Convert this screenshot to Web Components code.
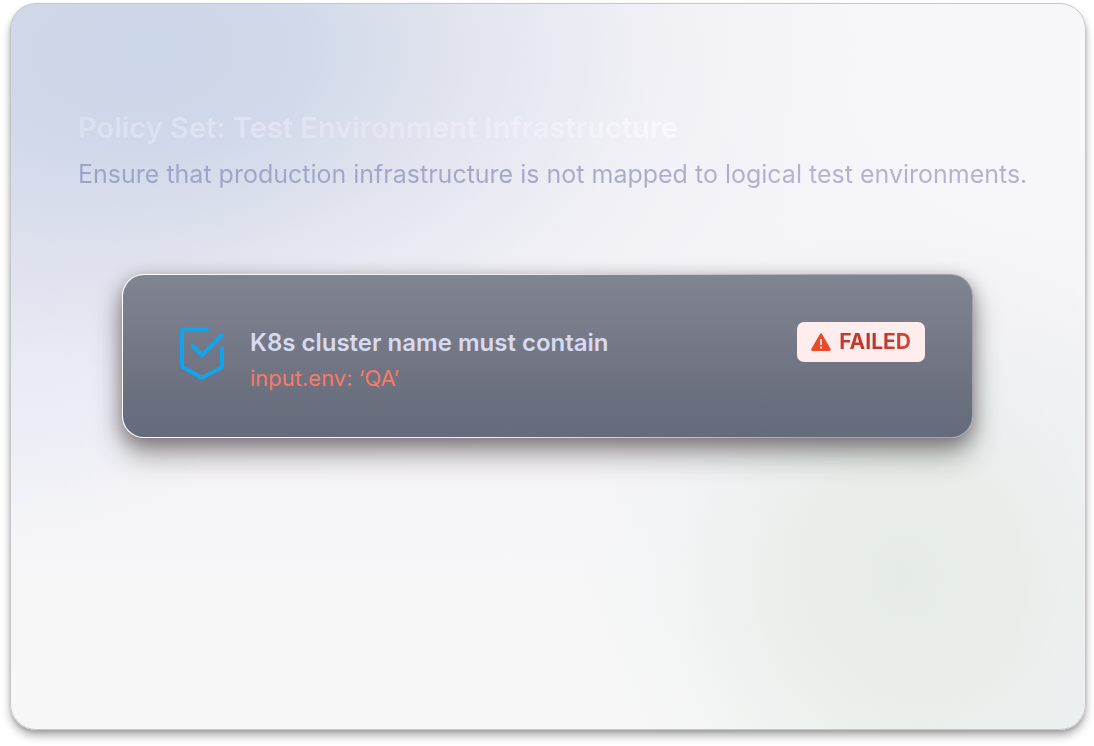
<!DOCTYPE html>
<html lang="en">
<head>
<meta charset="utf-8">
<meta name="viewport" content="width=device-width, initial-scale=1">
<title>Policy Set</title>
<style>
  body { margin: 0; background: #fff; font-family: Inter, "Liberation Sans", sans-serif; }
</style>
</head>
<body>
<policy-set>
  <span slot="title">Policy Set: Test Environment Infrastructure</span>
  <span slot="description">Ensure that production infrastructure is not mapped to logical test environments.</span>
  <policy-rule>
    <shield-icon slot="icon"></shield-icon>
    K8s cluster name must contain
    <span slot="detail">input.env: ‘QA’</span>
    <status-badge slot="status">FAILED</status-badge>
  </policy-rule>
</policy-set>

<template id="policy-set">
  <style>
    :host { display: flex; box-sizing: border-box; min-height: 100vh; padding: 3px 8px 16px 10px; }
    section {
      flex: 1; min-width: 0; box-sizing: border-box; padding: 106px 0 80px;
      border: 1px solid #c6c8c8; border-radius: 26px;
      background:
        radial-gradient(ellipse 30% 50% at 83% 79%, #e5ebe5 0%, rgba(230,236,231,.75) 35%, rgba(236,240,238,.3) 72%, rgba(244,245,246,0) 100%),
        radial-gradient(ellipse 22% 60% at 100% 98%, rgba(233,237,240,.8), rgba(240,242,244,0)),
        radial-gradient(ellipse 66% 62% at 13% 6%, #cbd6e8 0%, rgba(206,215,232,.92) 22%, rgba(218,222,234,.68) 46%, rgba(234,234,242,.3) 74%, rgba(247,247,249,0) 100%),
        radial-gradient(ellipse 30% 58% at 0% 18%, rgba(216,221,241,.85), rgba(240,238,248,0)),
        radial-gradient(ellipse 40% 40% at 100% 10%, #f8f7f8, rgba(248,247,248,0)),
        linear-gradient(180deg, #f5f4f8 0%, #f4f3f8 55%, #f6f6f8 75%, #f7f7f7 95%);
      box-shadow: 0 6px 8px rgba(0,0,0,.3), 0 2px 3px rgba(0,0,0,.12);
    }
    header { padding: 0 40px 0 67px; }
    h1 { margin: 0; font-size: 29px; line-height: 36px; font-weight: 600; color: transparent;
      background: linear-gradient(90deg, #d9e1ef, #e6e5f4 30%, #eeedf8 44%, #f9f8fd 60%); -webkit-background-clip: text; background-clip: text; }
    p { margin: 12px 0 0; font-size: 25px; line-height: 32px; color: transparent;
      background: linear-gradient(90deg, #9ba4c8, #a5a7ca 45%, #b5b1ce 75%); -webkit-background-clip: text; background-clip: text; }
    .rules { padding: 84px 112px 0 111px; }
  </style>
  <section>
    <header>
      <h1><slot name="title"></slot></h1>
      <p><slot name="description"></slot></p>
    </header>
    <div class="rules"><slot></slot></div>
  </section>
</template>

<template id="policy-rule">
  <style>
    :host { display: block; }
    article {
      display: flex; align-items: flex-start; gap: 25px; box-sizing: border-box; min-height: 164px;
      padding: 47px 47px 40px 56px; border: 1px solid transparent; border-radius: 22px;
      background:
        linear-gradient(180deg, #808592 0%, #797c8a 30%, #6f7382 60%, #646b7a) padding-box,
        linear-gradient(100deg, #fff 0%, #eceef3 45%, #a3a9b4 80%, #9ba2ad) border-box;
      box-shadow: 0 16px 28px rgba(50,42,44,.46), 0 4px 16px rgba(50,42,44,.34);
    }
    .icon { padding-top: 4px; }
    .text { flex: 1; min-width: 0; padding-top: 3px; }
    h2 { margin: 0; font-size: 24px; line-height: 36px; font-weight: 600; color: #d8daef; }
    p { margin: 0; font-size: 22px; line-height: 34px; color: #f77a66; }
  </style>
  <article>
    <div class="icon"><slot name="icon"></slot></div>
    <div class="text">
      <h2><slot></slot></h2>
      <p><slot name="detail"></slot></p>
    </div>
    <slot name="status"></slot>
  </article>
</template>

<template id="shield-icon">
  <style>
    :host { display: block; }
    svg { display: block; width: 46px; height: 54px; fill: none; stroke: #12a5ee; stroke-width: 4; stroke-linecap: round; stroke-linejoin: round; }
  </style>
  <svg viewBox="0 0 46 54" aria-hidden="true">
    <path d="M28 3.500H5.500Q3 3.500 3 6.500V38.500Q3 40.500 4.500 41.500L20.500 50.500Q23 52.500 25.500 50.500L41 42.500Q43 41.500 43 38.500V22.500"/>
    <path d="M13.500 19.500L23 29.500L42.500 9.500"/>
  </svg>
</template>

<template id="status-badge">
  <style>
    :host { display: flex; align-items: center; gap: 8px; height: 40px; padding: 0 14px; border-radius: 7px;
      background: #ffeded; font-size: 21px; font-weight: 700; line-height: 40px; }
    svg { display: block; width: 20px; height: 18px; }
    b { font-weight: 700; color: transparent; background: linear-gradient(90deg, #c33b2d, #bd3529 55%, #cf4938); -webkit-background-clip: text; background-clip: text; }
  </style>
  <svg viewBox="0 0 20 18" aria-hidden="true">
    <path fill="#e84a2b" d="M9 1Q10 -.3 11 1L19.700 16Q20 18 18.500 18H1.500Q0 18 .3 16Z"/>
    <path stroke="#fdd8cf" stroke-width="2" d="M10 6V12M10 13.500V15.500"/>
  </svg>
  <b><slot></slot></b>
</template>

<script>
  for (const name of ['policy-set', 'policy-rule', 'shield-icon', 'status-badge']) {
    customElements.define(name, class extends HTMLElement {
      constructor() {
        super();
        this.attachShadow({ mode: 'open' })
          .append(document.getElementById(name).content.cloneNode(true));
      }
    });
  }
</script>
</body>
</html>
